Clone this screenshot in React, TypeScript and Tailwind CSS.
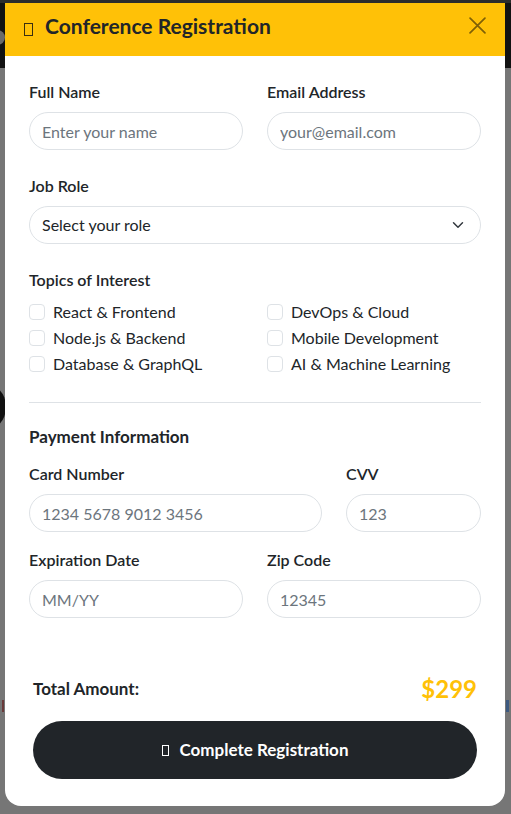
import React from "react";

const Tofu = ({ className }: { className: string }) => (
  <span className={"inline-block shrink-0 border-[1.5px] " + className} />
);

const Field = ({ label, placeholder }: { label: string; placeholder: string }) => (
  <div className="flex flex-col">
    <label className="mb-2 text-[16px] font-semibold leading-6 text-[#212529]">{label}</label>
    <input
      placeholder={placeholder}
      className="h-[38px] w-full rounded-full border border-[#dee2e6] bg-white px-3 text-[16px] text-[#212529] outline-none placeholder:text-[#6c757d]"
    />
  </div>
);

const Check = ({ label }: { label: string }) => (
  <label className="flex h-6 items-center gap-2 text-[16px] text-[#212529]">
    <span className="h-4 w-4 shrink-0 rounded-[4px] border border-[#dee2e6] bg-white" />
    <span>{label}</span>
  </label>
);

export default function App() {
  return (
    <div
      className="relative h-[814px] w-[511px] overflow-hidden bg-[#767676]"
      style={{ fontFamily: "Lato, 'Liberation Sans', sans-serif" }}
    >
      {/* dimmed page behind the modal */}
      <div className="absolute inset-x-0 top-0 h-[68px] bg-[#121212]" />
      <div className="absolute inset-x-0 top-0 h-[3px] bg-[#2c2c2c]" />
      <div className="absolute left-[-10px] top-[30px] h-[15px] w-[15px] rounded-full bg-[#6a6a6a]" />
      <div className="absolute left-[-40px] top-[383px] h-[48px] w-[46px] rounded-full bg-[#111]" />
      <div className="absolute left-[2px] top-[700px] h-[12px] w-[2px] bg-[#6a3a3a]" />
      <div className="absolute left-[506px] top-[700px] h-[12px] w-[3px] bg-[#3d5a80]" />

      <div className="relative ml-[5px] mt-[3px] w-[500px] overflow-hidden rounded-b-2xl bg-white">
        {/* header */}
        <div className="flex h-[53px] items-center justify-between bg-[#ffc107] pb-[7px] pl-[19px] pr-4">
          <div className="flex items-center">
            <Tofu className="mr-3 mt-[7px] h-[13px] w-[9px] border-[#3a2f10]" />
            <h2 className="text-[21px] font-bold leading-7 text-[#212529]">Conference Registration</h2>
          </div>
          <button className="mb-[2px] flex h-6 w-6 items-center justify-center">
            <svg width="17" height="17" viewBox="0 0 16 16" fill="none" stroke="#7f6006" strokeWidth="1.6" strokeLinecap="round">
              <path d="M1 1L15 15M15 1L1 15" />
            </svg>
          </button>
        </div>

        {/* body */}
        <div className="px-6 pt-6">
          <div className="grid grid-cols-2 gap-x-6">
            <Field label="Full Name" placeholder="Enter your name" />
            <Field label="Email Address" placeholder="your@email.com" />
          </div>

          <div className="mt-6 flex flex-col">
            <label className="mb-2 text-[16px] font-semibold leading-6 text-[#212529]">Job Role</label>
            <div className="flex h-[38px] items-center justify-between rounded-full border border-[#dee2e6] pl-3 pr-4 text-[16px] text-[#212529]">
              <span>Select your role</span>
              <svg width="12" height="12" viewBox="0 0 16 16" fill="none" stroke="#343a40" strokeWidth="2" strokeLinecap="round" strokeLinejoin="round">
                <path d="M2 5l6 6 6-6" />
              </svg>
            </div>
          </div>

          <div className="mt-6">
            <div className="mb-2 text-[16px] font-semibold leading-6 text-[#212529]">Topics of Interest</div>
            <div className="grid grid-cols-2 gap-x-6 gap-y-0.5">
              <Check label="React & Frontend" />
              <Check label="DevOps & Cloud" />
              <Check label="Node.js & Backend" />
              <Check label="Mobile Development" />
              <Check label="Database & GraphQL" />
              <Check label="AI & Machine Learning" />
            </div>
          </div>

          <hr className="mb-[22px] mt-[26px] border-t border-[#dee2e6]" />

          <div className="mb-[13px] text-[17px] font-bold leading-6 text-[#212529]">Payment Information</div>
          <div className="grid grid-cols-[1fr_135px] gap-x-6">
            <Field label="Card Number" placeholder="1234 5678 9012 3456" />
            <Field label="CVV" placeholder="123" />
          </div>
          <div className="mt-4 grid grid-cols-2 gap-x-6">
            <Field label="Expiration Date" placeholder="MM/YY" />
            <Field label="Zip Code" placeholder="12345" />
          </div>
        </div>

        {/* footer */}
        <div className="px-7 pb-[27px] pt-[55px]">
          <div className="flex h-8 items-center justify-between">
            <span className="text-[17px] font-bold text-[#212529]">Total Amount:</span>
            <span className="text-[24px] font-bold text-[#ffc107]">$299</span>
          </div>
          <button className="mt-4 flex h-[58px] w-full items-center justify-center rounded-full bg-[#212529] text-[17px] font-bold text-white">
            <Tofu className="mr-[11px] h-[11px] w-[7px] border-white" />
            Complete Registration
          </button>
        </div>
      </div>
    </div>
  );
}
